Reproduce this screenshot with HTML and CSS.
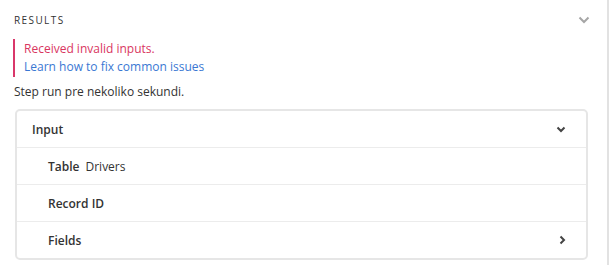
FILE: index.html
```html
<!DOCTYPE html>
<html lang="en">
<head>
    <meta charset="UTF-8">
    <title>Results</title>
    <link rel="stylesheet" href="styles.css">
</head>
<body>
    <div class="panel">
        <div class="panel-head">
            <span class="panel-title">RESULTS</span>
            <svg class="chev chev-muted" width="12" height="8" viewBox="0 0 12 8"><path d="M1.5 1.5 L6 6 L10.5 1.5" fill="none" stroke="currentColor" stroke-width="2"/></svg>
        </div>
        <div class="error-box">
            <div class="error-msg">Received invalid inputs.</div>
            <a class="error-link" href="#">Learn how to fix common issues</a>
        </div>
        <p class="run-time">Step run pre nekoliko sekundi.</p>
        <div class="card">
            <div class="row row-head">
                <span>Input</span>
                <svg class="chev" width="10" height="7" viewBox="0 0 10 7"><path d="M1.5 1.5 L5 5 L8.5 1.5" fill="none" stroke="currentColor" stroke-width="2"/></svg>
            </div>
            <div class="row row-sub"><span class="key">Table</span><span class="val">Drivers</span></div>
            <div class="row row-sub"><span class="key">Record ID</span></div>
            <div class="row row-sub">
                <span class="key">Fields</span>
                <svg class="chev" width="7" height="10" viewBox="0 0 7 10"><path d="M1.5 1.5 L5 5 L1.5 8.5" fill="none" stroke="currentColor" stroke-width="2"/></svg>
            </div>
        </div>
    </div>
</body>
</html>
```

FILE: styles.css
```css
body {
    margin: 0;
    font-family: "Open Sans", "Noto Sans", sans-serif;
    font-size: 12px;
    color: #333;
    background: #fff;
}

.panel {
    width: 609px;
    height: 265px;
    border-right: 2px solid #e2e2e2;
    padding: 10px 19px 0 13px;
    box-sizing: border-box;
}

.panel-head {
    display: flex;
    justify-content: space-between;
    align-items: center;
    height: 20px;
    padding-left: 1px;
}

.panel-title {
    font-size: 10px;
    letter-spacing: 1.4px;
    color: #333;
}

.chev {
    color: #444;
    display: block;
}

.chev-muted {
    color: #a6a6a6;
    margin-right: -2px;
}

.error-box {
    margin-top: 9px;
    border-left: 2px solid #d9376a;
    padding: 1px 0 1px 9px;
    line-height: 18px;
}

.error-msg {
    color: #d9365f;
}

.error-link {
    color: #3a78d3;
    text-decoration: none;
}

.run-time {
    margin: 6px 0 0 1px;
    line-height: 18px;
}

.card {
    margin: 8px 0 0 2px;
    border: 2px solid #e6e6e6;
    border-radius: 5px;
}

.row {
    display: flex;
    align-items: center;
    justify-content: space-between;
    height: 36px;
    padding: 0 20px 0 15px;
    border-top: 1px solid #ececec;
}

.row-head {
    border-top: none;
    font-weight: 600;
}

.row-sub {
    padding-left: 31px;
    justify-content: flex-start;
    font-weight: 600;
}

.row-sub .chev {
    margin-left: auto;
    margin-right: 0;
}

.val {
    font-weight: 400;
    margin-left: 6px;
}
```
